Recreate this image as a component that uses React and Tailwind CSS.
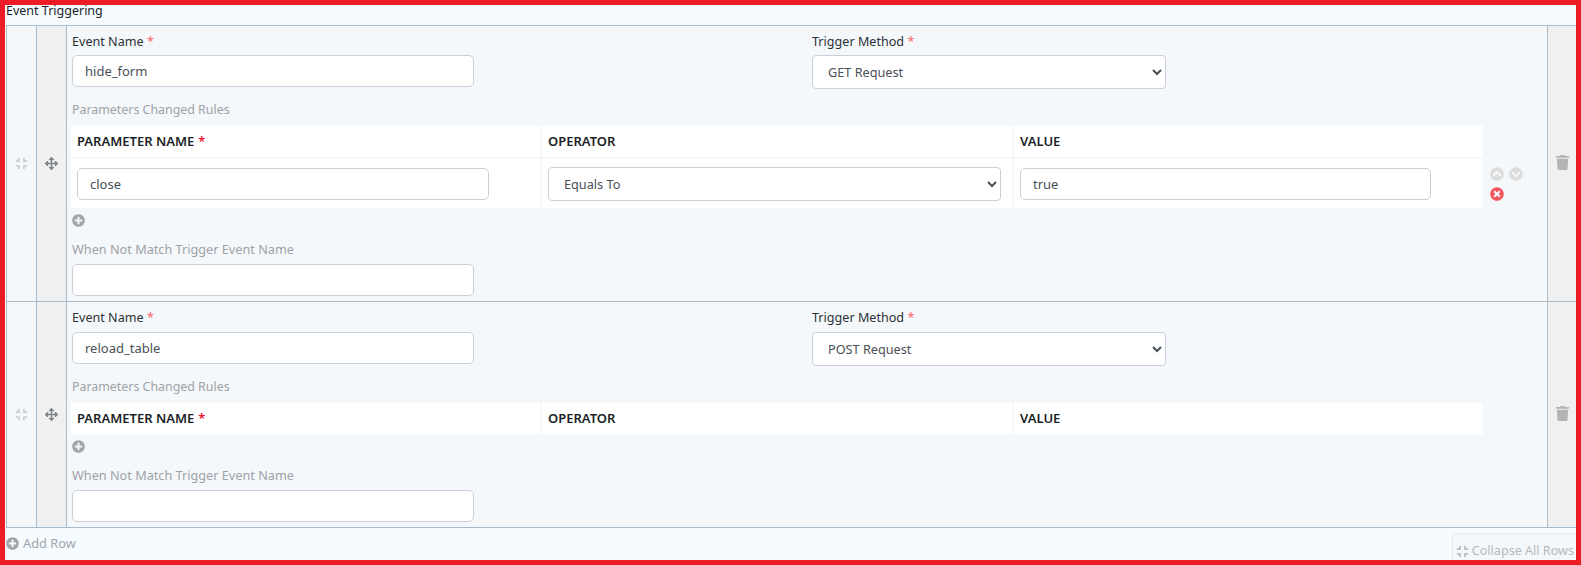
import { FaCompress, FaArrowsAlt, FaPlusCircle, FaTrash, FaChevronCircleUp, FaChevronCircleDown, FaTimesCircle } from 'react-icons/fa';

function Label({ children, className }) {
  return (
    <div className={`pt-[7px] text-[12.6px] leading-[18px] text-[#2b3138] ${className}`}>
      {children} <span className="text-[#f8646c]">*</span>
    </div>
  );
}

function TextInput({ value, className = 'w-[402px]' }) {
  return (
    <input
      readOnly
      value={value}
      className={`block h-[32px] rounded-[5px] border border-[#c9d0da] bg-white px-[12px] text-[13px] text-[#4a5058] outline-none ${className}`}
    />
  );
}

function Select({ value, options, className }) {
  return (
    <select
      defaultValue={value}
      className={`block h-[34px] rounded-[4px] border border-[#c9d0da] bg-white px-[11px] text-[12.7px] text-[#4a5058] outline-none ${className}`}
    >
      {options.map((option) => <option key={option}>{option}</option>)}
    </select>
  );
}

function HeaderCell({ children, required }) {
  return (
    <div className="flex h-[31px] items-center bg-white pl-[6px] pt-[1px] text-[13px] font-semibold text-[#1b1f27]">
      {children}
      {required && <span className="ml-[4px] text-[#f00f2c]">*</span>}
    </div>
  );
}

function EventRow({ name, method, rows, labelClass }) {
  return (
    <div className="flex border-t border-[#a9bccb]">
      <div className="flex w-[30px] shrink-0 items-center justify-center border-r border-[#a9bccb] bg-[#f5f8fa] text-[#c8cacc]">
        <FaCompress size={13} />
      </div>
      <div className="flex w-[30px] shrink-0 items-center justify-center border-r border-[#a9bccb] bg-[#f0f0f0] text-[#7d8388]">
        <FaArrowsAlt size={13} />
      </div>
      <div className="w-[1481px] shrink-0 border-r border-[#a9bccb] bg-[#f5f8fa] pl-[5px]">
        <div className="flex">
          <div className="w-[740px]">
            <Label className={labelClass}>Event Name</Label>
            <TextInput value={name} />
          </div>
          <div>
            <Label className={labelClass}>Trigger Method</Label>
            <Select value={method} options={['GET Request', 'POST Request']} className="w-[354px]" />
          </div>
        </div>
        <div className="mt-[12px] text-[12.4px] leading-[18px] text-[#9da2a8]">Parameters Changed Rules</div>
        <div className="-ml-[1px] mt-[7px] w-[1412px]">
          <div className="grid grid-cols-[469px_470px_469px] gap-x-[2px]">
            <HeaderCell required>PARAMETER NAME</HeaderCell>
            <HeaderCell>OPERATOR</HeaderCell>
            <HeaderCell>VALUE</HeaderCell>
          </div>
          {rows.map((row) => (
            <div key={row.parameter} className="relative mt-[2px] grid h-[49px] grid-cols-[469px_470px_469px] gap-x-[2px]">
              <div className="flex items-center bg-white pl-[6px]"><TextInput value={row.parameter} className="w-[412px]" /></div>
              <div className="flex items-center bg-white pl-[6px]"><Select value={row.operator} options={['Equals To', 'Not Equals To']} className="w-[453px]" /></div>
              <div className="flex items-center bg-white pl-[6px]"><TextInput value={row.value} className="w-[411px]" /></div>
              <div className="absolute left-[1419px] top-[8px] grid grid-cols-[14px_14px] gap-x-[5px] gap-y-[6px]">
                <FaChevronCircleUp size={14} className="text-[#dcdcdc]" />
                <FaChevronCircleDown size={14} className="text-[#dcdcdc]" />
                <FaTimesCircle size={14} className="text-[#f5565e]" />
              </div>
            </div>
          ))}
        </div>
        <FaPlusCircle size={13} className="mt-[6px] text-[#a2a6ab]" />
        <div className="mt-[13px] text-[12.7px] leading-[18px] text-[#9da2a8]">When Not Match Trigger Event Name</div>
        <TextInput value="" className="mt-[6px] w-[402px]" />
        <div className="h-[5px]" />
      </div>
      <div className="flex w-[29px] shrink-0 items-center justify-center bg-[#f0f0f0] text-[#b4b4b4]">
        <FaTrash size={15} className="mb-[2px]" />
      </div>
    </div>
  );
}

export default function App() {
  return (
    <div className="h-[565px] w-[1581px] overflow-hidden border-[5px] border-[#ed1c24] bg-[#f5fbff] font-['Noto_Sans',sans-serif]">
      <div className="h-[20px] pl-[1px] text-[12.5px] leading-[12px] text-[#1b1f27]">Event Triggering</div>
      <div className="ml-[1px] border-b border-l border-[#a9bccb]">
        <EventRow
          name="hide_form"
          method="GET Request"
          labelClass="h-[29px]"
          rows={[{ parameter: 'close', operator: 'Equals To', value: 'true' }]}
        />
        <EventRow name="reload_table" method="POST Request" labelClass="h-[30px]" rows={[]} />
      </div>
      <div className="relative flex h-[32px] items-start justify-between">
        <div className="flex items-center gap-[4px] pl-[1px] pt-[8px] text-[12.8px] leading-[15px] text-[#a0a5aa]">
          <FaPlusCircle size={13} />
          <span>Add Row</span>
        </div>
        <div className="mt-[5px] flex h-[40px] items-start gap-[3px] rounded-t-[4px] border border-b-0 border-r-0 border-[#e6e9ec] bg-[#f5f8fa] pl-[3px] pt-[8px] text-[12.6px] leading-[18px] text-[#b4b9be]">
          <FaCompress size={13} className="mt-[3px]" />
          <span className="pr-[2px]">Collapse All Rows</span>
        </div>
      </div>
    </div>
  );
}
